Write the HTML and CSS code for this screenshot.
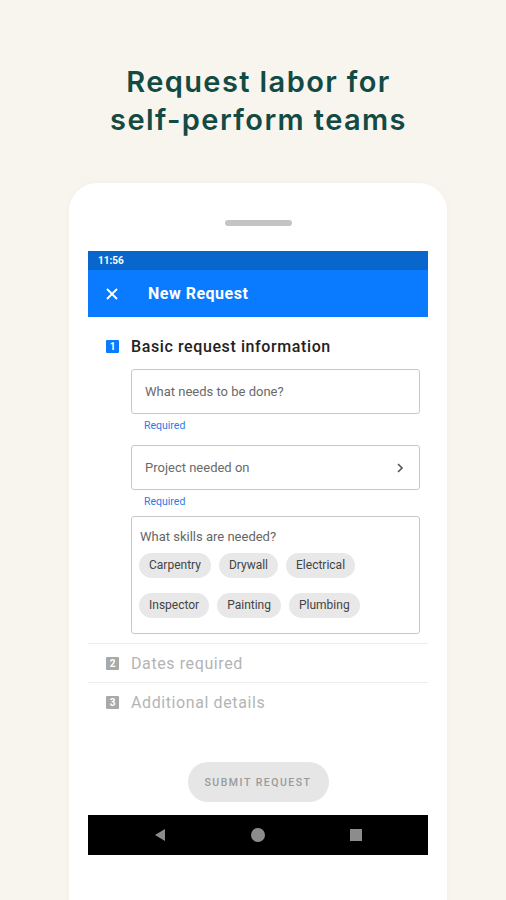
FILE: index.html
```html
<!DOCTYPE html>
<html lang="en">
<head>
    <meta charset="UTF-8">
    <meta name="viewport" content="width=device-width, initial-scale=1.0">
    <title>Request labor</title>
    <link rel="stylesheet" href="styles.css">
</head>
<body>

    <h1 class="headline">Request labor for<br>self-perform teams</h1>

    <div class="phone">
        <div class="handle"></div>

        <div class="screen">
            <div class="status-bar">11:56</div>

            <!-- App bar -->
            <div class="app-bar">
                <svg class="close-icon" width="14" height="14" viewBox="0 0 14 14">
                    <path d="M2 2 L12 12 M12 2 L2 12" stroke="#fff" stroke-width="1.8" fill="none"/>
                </svg>
                <span class="app-title">New Request</span>
            </div>

            <!-- Step 1 -->
            <div class="step step-active">
                <div class="step-head">
                    <span class="step-num">1</span>
                    <span class="step-title">Basic request information</span>
                </div>

                <div class="step-body">
                    <div class="field">What needs to be done?</div>
                    <div class="hint">Required</div>

                    <div class="field field-select">
                        <span>Project needed on</span>
                        <svg width="8" height="12" viewBox="0 0 8 12">
                            <path d="M2 2 L6 6 L2 10" stroke="#555" stroke-width="1.6" fill="none"/>
                        </svg>
                    </div>
                    <div class="hint">Required</div>

                    <div class="skills">
                        <div class="skills-label">What skills are needed?</div>
                        <div class="chips">
                            <span class="chip">Carpentry</span>
                            <span class="chip">Drywall</span>
                            <span class="chip">Electrical</span>
                            <span class="chip">Inspector</span>
                            <span class="chip">Painting</span>
                            <span class="chip">Plumbing</span>
                        </div>
                    </div>
                </div>
            </div>

            <!-- Steps 2 & 3 -->
            <div class="step step-muted">
                <div class="step-head">
                    <span class="step-num">2</span>
                    <span class="step-title">Dates required</span>
                </div>
            </div>
            <div class="step step-muted step-last">
                <div class="step-head">
                    <span class="step-num">3</span>
                    <span class="step-title">Additional details</span>
                </div>
            </div>

            <div class="submit-wrap">
                <button class="submit-btn">Submit Request</button>
            </div>

            <!-- Android nav -->
            <div class="nav-bar">
                <svg width="14" height="14" viewBox="0 0 14 14"><path d="M12 1 L12 13 L2 7 Z" fill="#8c8c8c"/></svg>
                <svg width="16" height="16" viewBox="0 0 16 16"><circle cx="8" cy="8" r="7" fill="#8c8c8c"/></svg>
                <svg width="14" height="14" viewBox="0 0 14 14"><rect x="1" y="1" width="12" height="12" fill="#8c8c8c"/></svg>
            </div>
        </div>
    </div>

</body>
</html>
```

FILE: styles.css
```css
body {
    margin: 0;
    padding: 0;
    background-color: #f8f5ef;
    font-family: 'Roboto', 'Liberation Sans', sans-serif;
    overflow: hidden;
}

.headline {
    margin: 63px 0 0;
    padding-left: 11px;
    text-align: center;
    font-family: 'Inter', sans-serif;
    font-size: 29px;
    line-height: 38px;
    font-weight: 600;
    color: #124a44; /* dark teal */
    letter-spacing: 1.4px;
}

.phone {
    width: 378px;
    margin: 44px 0 0 69px;
    padding-top: 37px;
    height: 723px;
    background-color: #fff;
    border-radius: 28px 28px 0 0;
    box-shadow: 0 0 6px rgba(0, 0, 0, 0.03);
}

.handle {
    width: 67px;
    height: 6px;
    margin: 0 auto;
    background-color: #c4c4c4;
    border-radius: 3px;
}

.screen {
    width: 340px;
    margin: 25px auto 0;
    background-color: #fff;
}

.status-bar {
    height: 19px;
    line-height: 19px;
    padding-left: 10px;
    background-color: #0866cc;
    color: #fff;
    font-size: 10px;
    font-weight: 700;
}

.app-bar {
    height: 47px;
    display: flex;
    align-items: center;
    background-color: #0a7bff;
    color: #fff;
}

.close-icon {
    margin-left: 17px;
    margin-right: 29px;
}

.app-title {
    font-size: 16px;
    font-weight: 700;
    letter-spacing: 0.5px;
}

.step {
    border-bottom: 1px solid #ececec;
}

.step-last {
    border-bottom: none;
}

.step-active {
    padding: 16px 8px 9px 0;
}

.step-head {
    display: flex;
    align-items: center;
    height: 26px;
    padding-left: 18px;
}

.step-muted .step-head {
    height: 38px;
}

.step-num {
    width: 13px;
    height: 13px;
    margin-right: 12px;
    background-color: #0a7bff;
    color: #fff;
    font-size: 10px;
    font-weight: 700;
    line-height: 13px;
    text-align: center;
    border-radius: 1px;
}

.step-title {
    font-size: 16px;
    font-weight: 500;
    color: #222;
    letter-spacing: 0.6px;
}

.step-muted .step-num {
    background-color: #a9a9a9;
}

.step-muted .step-title {
    color: #b4b4b4;
    font-weight: 400;
}

.step-body {
    margin: 10px 0 0 43px;
}

.field {
    height: 43px;
    display: flex;
    align-items: center;
    justify-content: space-between;
    padding: 0 13px;
    border: 1px solid #c8c8c8;
    border-radius: 3px;
    color: #6a6a6a;
    font-size: 13px;
}

.field-select svg {
    margin-right: 2px;
}

.hint {
    margin: 5px 0 12px 13px;
    line-height: 14px;
    font-size: 10.5px;
    color: #2a7be8;
}

.hint + .field + .hint {
    margin-bottom: 7px;
}

.skills {
    padding: 13px 7px 15px;
    border: 1px solid #c8c8c8;
    border-radius: 3px;
}

.skills-label {
    margin-left: 1px;
    line-height: 14px;
    font-size: 13px;
    color: #666;
}

.chips {
    display: flex;
    flex-wrap: wrap;
    gap: 15px 8px;
    margin-top: 9px;
    width: 240px;
}

.chip {
    height: 25px;
    line-height: 25px;
    padding: 0 10px;
    background-color: #e8e8e8;
    border-radius: 13px;
    font-size: 12px;
    color: #444;
}

.submit-wrap {
    display: flex;
    justify-content: center;
    padding: 41px 0 13px;
}

.submit-btn {
    width: 141px;
    height: 40px;
    border: none;
    border-radius: 20px;
    background-color: #e6e6e6;
    color: #9a9a9a;
    font-family: 'Roboto', sans-serif;
    font-size: 10.5px;
    font-weight: 500;
    letter-spacing: 1.5px;
    text-transform: uppercase;
}

.nav-bar {
    height: 40px;
    display: flex;
    align-items: center;
    justify-content: center;
    gap: 83px;
    background-color: #000;
}
```
